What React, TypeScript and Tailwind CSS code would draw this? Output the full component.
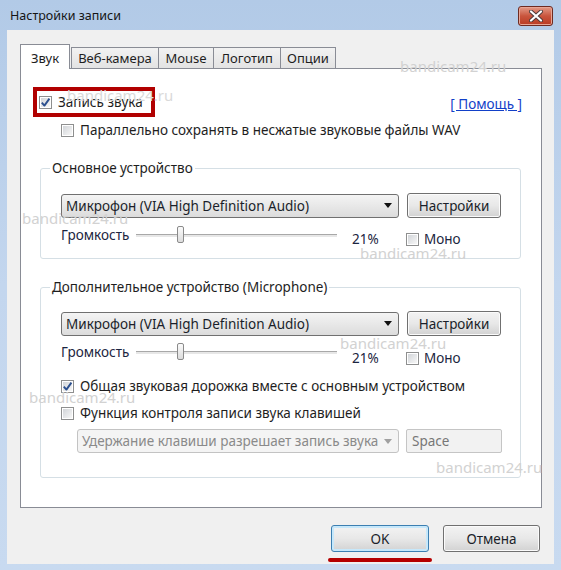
import React from "react";

function Cb({ checked }: { checked?: boolean }) {
  return (
    <span className="flex h-[13px] w-[13px] shrink-0 items-center justify-center border border-[#8e8f8f] bg-white p-px">
      <span className="flex h-full w-full items-center justify-center bg-gradient-to-br from-[#d2d5d9] to-[#f7f7f7]">
        {checked && (
          <svg width="11" height="11" viewBox="0 0 11 11" className="-m-px">
            <path d="M1.8 5.6 L4.4 8.6 L9.4 1.6" stroke="#2b4f8e" strokeWidth="1.9" fill="none" strokeLinejoin="round" />
          </svg>
        )}
      </span>
    </span>
  );
}

function Arrow({ disabled }: { disabled?: boolean }) {
  return (
    <svg width="8" height="5" viewBox="0 0 8 5" className="shrink-0">
      <path d="M0 0 H8 L4 5 Z" fill={disabled ? "#a0a0a0" : "#111"} />
    </svg>
  );
}

function Select({ text, className, disabled }: { text: string; className: string; disabled?: boolean }) {
  return (
    <div
      className={
        "flex h-[24px] shrink-0 items-center justify-between rounded-[3px] border pl-[4px] pr-[6px] " +
        (disabled
          ? "border-[#c3c3c3] bg-[#f4f4f4] text-[#8a8a8a] "
          : "border-[#707070] bg-gradient-to-b from-[#f4f4f4] to-[#dcdcdc] text-[#1b1f2a] ") +
        className
      }
    >
      <span className="whitespace-nowrap leading-[18px]">{text}</span>
      <Arrow disabled={disabled} />
    </div>
  );
}

function Btn({ children, className, focused }: { children: React.ReactNode; className: string; focused?: boolean }) {
  return (
    <div
      className={
        "flex shrink-0 items-center justify-center rounded-[3px] border bg-gradient-to-b from-[#f3f3f3] via-[#e8e8e8] to-[#d2d2d2] text-[#1b1f2a] " +
        (focused ? "border-[#3c7fb1] shadow-[inset_0_0_0_2px_#c6e8fb] " : "border-[#707070] shadow-[inset_0_0_0_1px_#fbfbfb] ") +
        className
      }
    >
      <span className="leading-[18px]">{children}</span>
    </div>
  );
}

function Slider() {
  return (
    <div className="relative flex h-[18px] w-[201px] items-center">
      <div className="h-[3px] w-[201px] border-t border-[#a8a8a8] bg-[#e7e7e7]" />
      <div className="absolute left-[41px] top-[0px] h-[17px] w-[7px] rounded-[2px] border border-[#8a8a8a] bg-gradient-to-b from-[#fbfbfb] to-[#dcdcdc]" />
    </div>
  );
}

function VolumeRow({ offset }: { offset: string }) {
  return (
    <div className="ml-[20px] grid grid-cols-[75px_201px_15px_54px_13px_5px_60px] items-start">
      <span className="whitespace-nowrap leading-[18px] text-[#1b2540]">Громкость</span>
      <Slider />
      <span />
      <span className={"leading-[18px] text-[#1b2540] " + offset}>21%</span>
      <span className={"flex h-[18px] items-center " + offset}>
        <Cb />
      </span>
      <span />
      <span className={"leading-[18px] text-[#1b2540] " + offset}>Моно</span>
    </div>
  );
}

function DeviceRow() {
  return (
    <div className="ml-[20px] flex items-center">
      <Select text="Микрофон (VIA High Definition Audio)" className="w-[338px]" />
      <Btn className="ml-[8px] h-[25px] w-[94px]">Настройки</Btn>
    </div>
  );
}

function Group({ title, className, children }: { title: string; className: string; children: React.ReactNode }) {
  return (
    <div className={"relative ml-[19px] w-[481px] shrink-0 rounded-[3px] border border-[#d5dfe5] " + className}>
      <span className="absolute -top-[10px] left-[9px] whitespace-nowrap bg-white px-[2px] leading-[18px] text-[#1e1e1e]">{title}</span>
      {children}
    </div>
  );
}

function Tab({ label, className }: { label: string; className: string }) {
  return (
    <div
      className={
        "-ml-px flex h-[21px] items-center justify-center border border-b-0 border-[#898c95] bg-gradient-to-b from-[#f2f2f2] to-[#e3e3e3] text-[13px] text-[#1e1e1e] " +
        className
      }
    >
      <span className="leading-[18px]">{label}</span>
    </div>
  );
}

export default function App() {
  return (
    <div className="relative flex h-[570px] w-[561px] flex-col overflow-hidden bg-gradient-to-b from-[#b2cae7] via-[#c3d6ee] to-[#c8daf0] font-['Noto_Sans',sans-serif] text-[13.5px] text-[#1e1e1e]">
      {/* title bar */}
      <div className="flex h-[30px] shrink-0 items-start justify-between pl-[10px] pr-[8px]">
        <span className="mt-[7px] text-[12.5px] leading-[18px] text-[#151515]">Настройки записи</span>
        <div className="mt-[6px] flex h-[20px] w-[35px] items-center justify-center rounded-[3px] border border-[#6e2b22] bg-gradient-to-b from-[#e29a88] via-[#c9553d] to-[#b93a22] shadow-[inset_0_0_0_1px_#e8a595]">
          <svg width="14" height="12" viewBox="0 0 14 12">
            <path d="M2 1.5 L12 10.5 M12 1.5 L2 10.5" stroke="#4a3a3a" strokeWidth="4" strokeLinecap="round" />
            <path d="M2 1.5 L12 10.5 M12 1.5 L2 10.5" stroke="#ffffff" strokeWidth="2.2" strokeLinecap="round" />
          </svg>
        </div>
      </div>

      {/* client area */}
      <div className="mx-[7px] flex h-[534px] shrink-0 flex-col bg-[#f0f0f0] pl-[13px] pt-[14px]">
        {/* tabs */}
        <div className="relative z-10 flex h-[24px] items-end">
          <div className="-mb-px flex h-[25px] w-[50px] items-start justify-center border border-b-0 border-[#898c95] bg-white pt-[4px] text-[13px]">
            <span className="leading-[18px]">Звук</span>
          </div>
          <Tab label="Веб-камера" className="ml-[1px] w-[88px]" />
          <Tab label="Mouse" className="w-[56px]" />
          <Tab label="Логотип" className="w-[68px]" />
          <Tab label="Опции" className="w-[56px]" />
        </div>

        {/* panel */}
        <div className="flex h-[440px] w-[522px] shrink-0 flex-col border border-[#898c95] bg-white">
          <div className="mt-[18px] flex items-center justify-between pr-[19px]">
            <div className="ml-[12px] flex h-[30px] w-[122px] items-center border-4 border-[#b10000] pl-[2px]">
              <Cb checked />
              <span className="ml-[6px] whitespace-nowrap leading-[18px]">Запись звука</span>
            </div>
            <span className="mt-[3px] leading-[18px] text-[#1240c8] underline">[ Помощь ]</span>
          </div>

          <div className="ml-[40px] mt-[4px] flex h-[18px] items-center">
            <Cb />
            <span className="ml-[6px] whitespace-nowrap leading-[18px]">Параллельно сохранять в несжатые звуковые файлы WAV</span>
          </div>

          <Group title="Основное устройство" className="mt-[29px] h-[91px] pt-[24px]">
            <DeviceRow />
            <div className="mt-[8px]">
              <VolumeRow offset="mt-[4px]" />
            </div>
          </Group>

          <Group title="Дополнительное устройство (Microphone)" className="mt-[28px] h-[191px] pt-[23px]">
            <DeviceRow />
            <div className="mt-[7px]">
              <VolumeRow offset="mt-[6px]" />
            </div>
            <div className="ml-[20px] mt-[10px] flex h-[18px] items-center">
              <Cb checked />
              <span className="ml-[6px] whitespace-nowrap leading-[18px]">Общая звуковая дорожка вместе с основным устройством</span>
            </div>
            <div className="ml-[20px] mt-[9px] flex h-[18px] items-center">
              <Cb />
              <span className="ml-[6px] whitespace-nowrap leading-[18px]">Функция контроля записи звука клавишей</span>
            </div>
            <div className="ml-[36px] mt-[7px] flex items-center">
              <Select text="Удержание клавиши разрешает запись звука" className="w-[322px]" disabled />
              <div className="ml-[7px] flex h-[24px] w-[96px] items-center rounded-[2px] border border-[#c5c5c5] bg-[#f2f2f2] pl-[5px] text-[#777]">
                <span className="leading-[18px]">Space</span>
              </div>
            </div>
          </Group>
        </div>

        {/* buttons */}
        <div className="mt-[17px] flex items-start justify-end gap-[11px] pr-[14px]">
          <div className="flex flex-col items-center">
            <Btn focused className="h-[27px] w-[98px]">OK</Btn>
            <div className="mt-[6px] h-[4px] w-[104px] rounded-full bg-[#b50000]" />
          </div>
          <Btn className="h-[27px] w-[97px]">Отмена</Btn>
        </div>
      </div>

      {/* watermarks */}
      <span className="absolute left-[400px] top-[56px] text-[15px] leading-[20px] text-[#d2d2d2]">bandicam24.ru</span>
      <span className="absolute left-[67px] top-[85px] text-[15px] leading-[20px] text-[#dadada]">bandicam24.ru</span>
      <span className="absolute left-[22px] top-[208px] text-[15px] leading-[20px] text-[#d2d2d2]">bandicam24.ru</span>
      <span className="absolute left-[360px] top-[243px] text-[15px] leading-[20px] text-[#d2d2d2]">bandicam24.ru</span>
      <span className="absolute left-[340px] top-[333px] text-[15px] leading-[20px] text-[#d2d2d2]">bandicam24.ru</span>
      <span className="absolute left-[29px] top-[387px] text-[15px] leading-[20px] text-[#d2d2d2]">bandicam24.ru</span>
      <span className="absolute left-[436px] top-[457px] text-[15px] leading-[20px] text-[#d2d2d2]">bandicam24.ru</span>
    </div>
  );
}
